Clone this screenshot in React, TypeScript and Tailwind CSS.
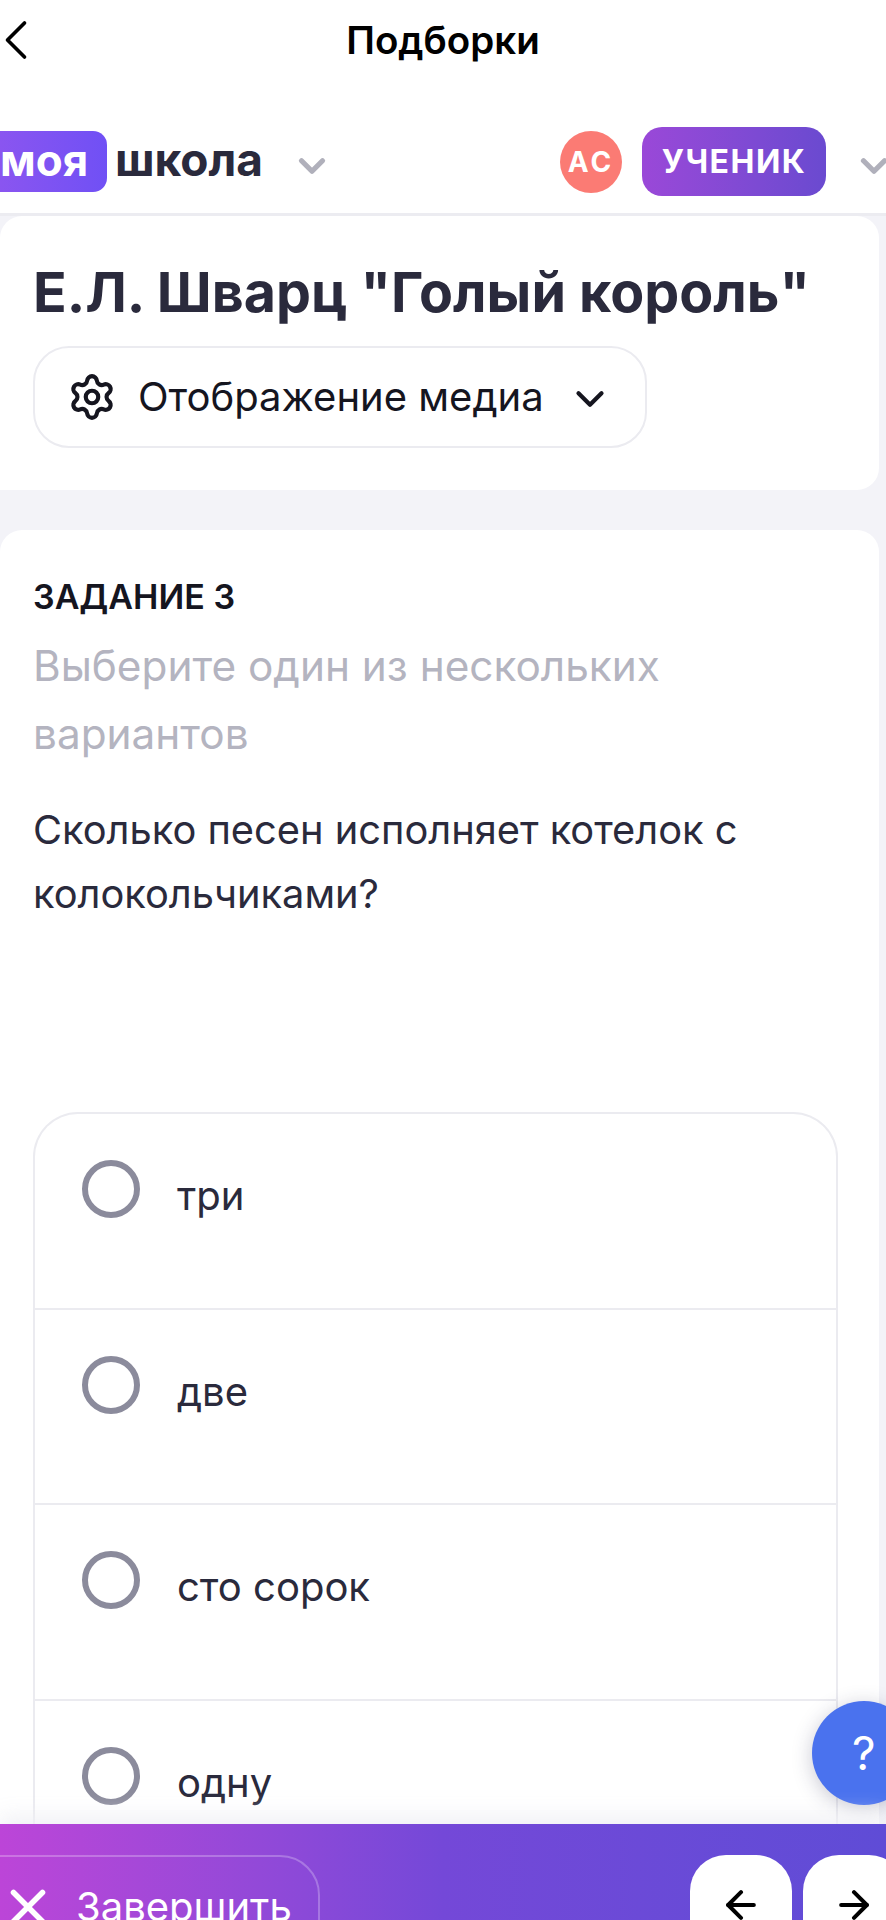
import { ArrowLeft, ArrowRight, ChevronDown, ChevronLeft, Settings, X } from 'lucide-react';

const options = ['три', 'две', 'сто сорок', 'одну'];

const Header = () => (
    <div className="shrink-0 bg-white h-[216px] border-b-[3px] border-[#ececf1]">
        <div className="h-[82px] relative flex items-center justify-center">
            <ChevronLeft className="absolute left-[-18px] top-[6px] text-black" size={68} strokeWidth={1.3} />
            <span className="text-[38.5px] font-semibold text-black">Подборки</span>
        </div>
        <div className="flex items-center h-[131px] pt-[28px]">
            <div className="h-[61px] w-[107px] shrink-0 rounded-r-[14px] bg-gradient-to-r from-[#8a55f0] to-[#7050f5] flex items-center text-white font-bold text-[44px] pb-[4px]">
                моя
            </div>
            <span className="ml-[8px] mb-[5px] text-[46px] font-bold text-[#2a2a3c] leading-none">школа</span>
            <ChevronDown className="ml-[28px] mt-[8px] shrink-0 text-[#b0b0bb]" size={42} strokeWidth={3} />
            <div className="ml-[227px] w-[62px] h-[62px] shrink-0 rounded-full bg-[#fb7b74] flex items-center justify-center text-white font-bold text-[28px] tracking-[3px]">
                АС
            </div>
            <div className="ml-[20px] w-[184px] h-[69px] shrink-0 rounded-[20px] bg-gradient-to-r from-[#9a48d8] to-[#6a4ad0] flex items-center justify-center text-white font-bold text-[32px] tracking-[1.5px]">
                УЧЕНИК
            </div>
            <ChevronDown className="ml-[27px] mt-[8px] shrink-0 text-[#b0b0bb]" size={42} strokeWidth={3} />
        </div>
    </div>
);

const TitleCard = () => (
    <div className="mr-[7px] h-[274px] bg-white rounded-r-[22px] rounded-tl-[22px] pl-[33px] pt-[42px]">
        <h1 className="text-[55.5px] font-bold leading-[68px] text-[#2a2a3c] whitespace-nowrap">Е.Л. Шварц "Голый король"</h1>
        <div className="mt-[20px] w-[614px] h-[102px] rounded-[36px] border-2 border-[#ebebf0] flex items-center pl-[32px]">
            <Settings className="shrink-0 text-[#15151f]" size={50} strokeWidth={2} />
            <span className="ml-[21px] text-[40px] text-[#15151f] whitespace-nowrap">Отображение медиа</span>
            <ChevronDown className="ml-[23px] mt-[4px] shrink-0 text-[#15151f]" size={46} strokeWidth={2.2} />
        </div>
    </div>
);

const Option = ({ label }: { label: string }) => (
    <div className="h-[195.5px] flex items-start pl-[47px] pt-[46px] border-b-2 border-[#ebebf0]">
        <div className="w-[58px] h-[58px] shrink-0 rounded-full border-[6px] border-[#8b8b9c]" />
        <span className="ml-[37px] mt-[8px] text-[40px] leading-[56px] text-[#2a2a3c]">{label}</span>
    </div>
);

const TaskCard = () => (
    <div className="mt-[40px] mr-[7px] flex-1 bg-white rounded-tr-[22px] rounded-tl-[22px] pl-[33px] pr-[41px] pt-[43px]">
        <div className="text-[34px] font-semibold leading-[48px] text-[#15151f]">ЗАДАНИЕ 3</div>
        <div className="mt-[11px] text-[42.3px] leading-[68px] text-[#b4b4c0]">Выберите один из нескольких вариантов</div>
        <div className="mt-[30px] text-[39.8px] leading-[63.5px] text-[#2a2a3c]">Сколько песен исполняет котелок с колокольчиками?</div>
        <div className="mt-[187px] rounded-t-[45px] border-2 border-b-0 border-[#ebebf0]">
            {options.map((o) => (
                <Option key={o} label={o} />
            ))}
        </div>
    </div>
);

const BottomBar = () => (
    <div className="absolute left-0 right-0 bottom-0 h-[96px] bg-gradient-to-r from-[#bc45d8] via-[#7448d8] to-[#5f4cd6] overflow-hidden shadow-[0_-8px_20px_rgba(240,240,245,0.9)]">
        <div className="absolute left-[-40px] top-[31px] w-[360px] h-[110px] rounded-[40px] border-2 border-white/25 flex items-start pl-[37px] pt-[21px]">
            <X className="text-white shrink-0" size={58} strokeWidth={2.3} />
            <span className="ml-[19px] mt-[4px] text-[40px] leading-[50px] text-white whitespace-nowrap">Завершить</span>
        </div>
        <div className="absolute left-[690px] top-[31px] w-[102px] h-[110px] rounded-[36px] bg-white flex justify-center pt-[28px]">
            <ArrowLeft className="text-black" size={44} strokeWidth={2.2} />
        </div>
        <div className="absolute left-[803px] top-[31px] w-[102px] h-[110px] rounded-[36px] bg-white flex justify-center pt-[28px]">
            <ArrowRight className="text-black" size={44} strokeWidth={2.2} />
        </div>
    </div>
);

export default function App() {
    return (
        <div className="relative w-[886px] h-[1920px] overflow-hidden bg-[#f3f3f8] flex flex-col font-['Inter',sans-serif]">
            <Header />
            <TitleCard />
            <TaskCard />
            <div className="absolute left-[812px] top-[1701px] w-[104px] h-[104px] rounded-full bg-[#4a72ee] shadow-[0_4px_20px_rgba(40,40,80,0.25)] flex items-center pl-[40px] text-white text-[46px]">
                ?
            </div>
            <BottomBar />
        </div>
    );
}
